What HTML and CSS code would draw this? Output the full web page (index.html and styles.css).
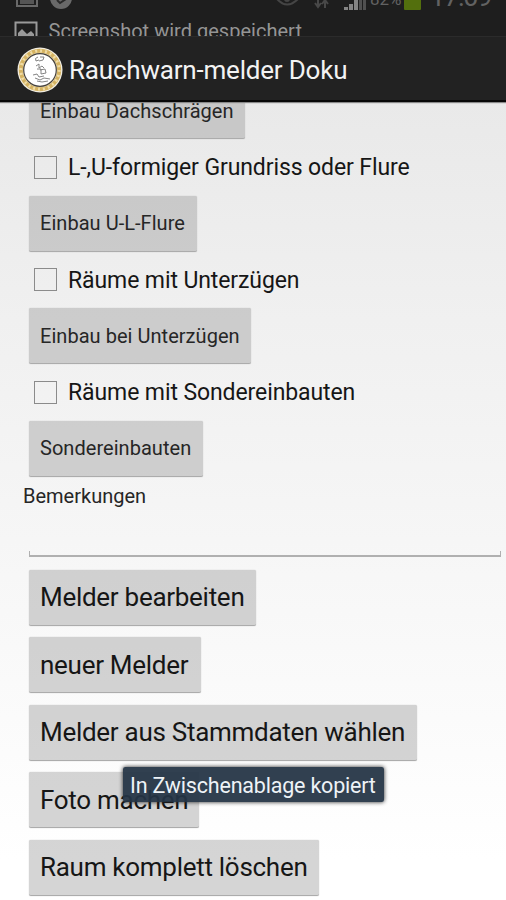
FILE: index.html
```html
<!DOCTYPE html>
<html lang="de">
<head>
<meta charset="utf-8">
<title>Rauchwarn-melder Doku</title>
<link rel="stylesheet" href="styles.css">
</head>
<body>
<header class="top">
  <div class="status">
    <svg class="status-icons" width="506" height="12" viewBox="0 0 506 12">
      <g fill="none" stroke="#696969" stroke-width="2"><path d="M17 0V6H37V0"/></g>
      <path d="M20 0h14v4H20z" fill="#555"/>
      <circle cx="61" cy="-2" r="11" fill="#696969"/>
      <path d="M57 0l3 3 6-4" fill="none" stroke="#2a2a2a" stroke-width="2"/>
      <path d="M277-1q10 11 21 0" fill="none" stroke="#454545" stroke-width="2"/>
      <circle cx="287" cy="-1" r="3" fill="#454545"/>
      <path d="M318 0v7m-3-4l3 4 3-4M325 8V0m-3 4l3-4 3 4" fill="none" stroke="#484848" stroke-width="2"/>
      <path d="M344 10v-3h4v3zM349 10V4h4v6zM354 10V0h4v10z" fill="#858585"/>
      <path d="M359 10V0h3v10zM363 10V0h3v10z" fill="#505050"/>
      <path d="M404 0h17v9q0 1-1 1h-15q-1 0-1-1z" fill="#536f0d"/>
    </svg>
    <span class="battery">82%</span>
    <span class="clock">17:09</span>
  </div>
  <div class="notice">
    <svg width="24" height="16" viewBox="0 0 24 16"><path d="M1.500 17V1.500H22.500V17" fill="none" stroke="#999" stroke-width="2"/><path d="M4 16V12l4-4 5 5 4-3 3 3v3z" fill="#999"/></svg>
    <span class="notice-text">Screenshot wird gespeichert</span>
  </div>
  <div class="appbar">
    <svg class="logo" width="46" height="46" viewBox="0 0 46 46">
      <circle cx="23" cy="23" r="22.500" fill="#f1ede2"/>
      <circle cx="23" cy="23" r="19.200" fill="none" stroke="#d5b362" stroke-width="4"/>
      <circle cx="23" cy="23" r="19.200" fill="none" stroke="#f0dca4" stroke-width="3" stroke-dasharray="2 3"/>
      <circle cx="23" cy="23" r="16.300" fill="#fff" stroke="#47423a" stroke-width="1.200"/>
      <path d="M21 10q-4 1-2 4l3-1m1-3l4 0-1 3-4 1M19 19l3-2 0 4 3-2 2 2M20 22l4 0M23 23l5-1 1 4-5 1 0-5M16 28l4-1 2 3 5-1M18 31l5 2 4-2 6 1M20 34l5 1 6-1" fill="none" stroke="#777" stroke-width=".9"/>
    </svg>
    <h1 class="title">Rauchwarn-melder Doku</h1>
  </div>
</header>
<main class="content">
  <section class="rooms">
    <button class="btn small b1"><span>Einbau Dachschrägen</span></button>
    <label class="check"><i class="box"></i><span>L-,U-formiger Grundriss oder Flure</span></label>
    <button class="btn small b2"><span>Einbau U-L-Flure</span></button>
    <label class="check"><i class="box"></i><span>Räume mit Unterzügen</span></label>
    <button class="btn small b3"><span>Einbau bei Unterzügen</span></button>
    <label class="check"><i class="box"></i><span>Räume mit Sondereinbauten</span></label>
    <button class="btn small b4"><span>Sondereinbauten</span></button>
  </section>
  <div class="remark">Bemerkungen</div>
  <div class="field"></div>
  <section class="actions">
    <button class="btn b5"><span>Melder bearbeiten</span></button>
    <button class="btn b6"><span>neuer Melder</span></button>
    <button class="btn b7"><span>Melder aus Stammdaten wählen</span></button>
    <button class="btn b8"><span>Foto machen</span></button>
    <button class="btn b9"><span>Raum komplett löschen</span></button>
  </section>
</main>
<div class="toast">In Zwischenablage kopiert</div>
</body>
</html>
```
FILE: styles.css
```css
* { box-sizing: border-box; }
body {
  margin: 0;
  width: 506px;
  height: 900px;
  overflow: hidden;
  position: relative;
  font-family: Roboto, "Liberation Sans", sans-serif;
  color: #161616;
  background: linear-gradient(#e9e9e9 100px, #f0f0f0 320px, #f6f6f6 540px, #fff 860px);
}
.top {
  position: relative;
  z-index: 1;
  height: 102px;
  background: #222;
  border-bottom: 2px solid #080808;
  box-shadow: 0 1px 1px #888;
}
.status { height: 20px; position: relative; overflow: hidden; background: #1e1e1e; color: #626262; }
.status-icons { display: block; }
.battery { position: absolute; left: 370px; top: -11px; font-size: 17px; line-height: 20px; }
.clock { position: absolute; left: 430px; top: -18px; font-size: 27px; line-height: 30px; letter-spacing: -1.2px; }
.notice {
  height: 16px;
  overflow: hidden;
  display: flex;
  padding-left: 14px;
  gap: 10.5px;
  background: #1e1e1e;
  color: #959595;
}
.notice svg { margin-top: 1px; flex: none; }
.notice-text { font-size: 20px; line-height: 23px; letter-spacing: 0.02px; white-space: nowrap; }
.appbar { height: 64px; border-top: 1px solid #2b2b2b; display: flex; align-items: center; padding: 3px 0 0 17px; }
.logo { flex: none; }
.title { margin: 0 0 0 6px; color: #f3f3f3; font-size: 26px; font-weight: 400; line-height: 32px; letter-spacing: -0.2px; white-space: nowrap; }
.content { display: block; }
.rooms { margin-top: -19px; padding-left: 28.5px; display: flex; flex-direction: column; align-items: flex-start; }
.btn {
  height: 56px;
  margin: 0;
  padding: 0 0 0 11.5px;
  border: 0;
  border-bottom: 1.5px solid #acacac;
  border-radius: 2px;
  background: rgba(150, 150, 150, 0.4);
  box-shadow: 0 0 1px #aaa;
  font: 400 26px/32px Roboto, "Liberation Sans", sans-serif;
  letter-spacing: -0.28px;
  color: #161616;
  text-align: left;
  white-space: nowrap;
}
.small { font-size: 20px; letter-spacing: 0.04px; color: #262626; }
.check { height: 56.500px; display: flex; align-items: center; padding-left: 5px; font-size: 23px; line-height: 30px; letter-spacing: -0.1px; white-space: nowrap; }
.check span { padding-top: 2px; }
.box { width: 23px; height: 23px; border: 1px solid #8b8b8b; margin-right: 11.5px; }
.b1 { width: 216.500px; }
.b2 { width: 168.500px; }
.b3 { width: 222.500px; }
.b4 { width: 174px; }
.b5 { width: 227.500px; }
.b6 { width: 172px; }
.b7 { width: 388.500px; }
.b8 { width: 170.500px; }
.b9 { width: 290px; }
.remark { margin: 7px 0 0 23px; font-size: 20px; line-height: 24px; color: #262626; }
.field { height: 6px; margin: 43px 5px 0 28.5px; border: 1px solid #b0b0b0; border-top: 0; border-bottom-width: 2px; }
.actions { margin-top: 13px; padding-left: 28.5px; display: flex; flex-direction: column; align-items: flex-start; gap: 11.5px; }
.toast {
  position: absolute;
  z-index: 2;
  left: 123px;
  top: 767px;
  width: 261px;
  height: 35px;
  padding-left: 7px;
  border-radius: 2px;
  background: rgba(36, 52, 69, 0.94);
  box-shadow: 0 0 4px #222;
  color: #eef3f7;
  font-size: 21.5px;
  letter-spacing: -0.2px;
  line-height: 37px;
  white-space: nowrap;
}
```
